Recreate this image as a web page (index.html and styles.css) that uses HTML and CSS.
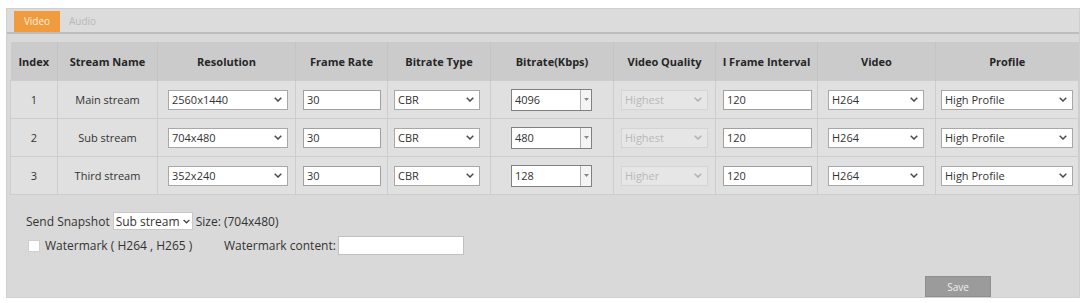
FILE: index.html
```html
<!DOCTYPE html>
<html>
<head>
<meta charset="utf-8">
<link rel="stylesheet" href="styles.css">
</head>
<body>
<div class="panel">
  <div class="tabs">
    <div class="tab active">Video</div>
    <div class="tab">Audio</div>
  </div>
  <table class="grid">
    <colgroup>
      <col style="width:47px"><col style="width:100px"><col style="width:138px"><col style="width:92px"><col style="width:103px"><col style="width:123px"><col style="width:102px"><col style="width:102px"><col style="width:118px"><col style="width:143px">
    </colgroup>
    <thead>
      <tr>
        <th>Index</th><th>Stream Name</th><th>Resolution</th><th>Frame Rate</th><th>Bitrate Type</th><th>Bitrate(Kbps)</th><th>Video Quality</th><th>I Frame Interval</th><th>Video</th><th>Profile</th>
      </tr>
    </thead>
    <tbody>
      <tr>
        <td class="c">1</td><td class="c">Main stream</td>
        <td><div class="sel w-res"><span>2560x1440</span><svg class="chev" viewBox="0 0 8 5"><path d="M0.7 0.7 L4 4 L7.3 0.7"/></svg></div></td>
        <td><input class="txt w-fr" type="text" value="30"></td>
        <td><div class="sel w-bt"><span>CBR</span><svg class="chev" viewBox="0 0 8 5"><path d="M0.7 0.7 L4 4 L7.3 0.7"/></svg></div></td>
        <td><div class="combo"><input class="txt w-br" type="text" value="4096"><span class="spin"><svg viewBox="0 0 5 3"><path d="M0 0 H5 L2.5 3Z"/></svg></span></div></td>
        <td><div class="sel w-q dis"><span>Highest</span><svg class="chev" viewBox="0 0 8 5"><path d="M0.7 0.7 L4 4 L7.3 0.7"/></svg></div></td>
        <td><input class="txt w-if" type="text" value="120"></td>
        <td><div class="sel w-v"><span>H264</span><svg class="chev" viewBox="0 0 8 5"><path d="M0.7 0.7 L4 4 L7.3 0.7"/></svg></div></td>
        <td><div class="sel w-p"><span>High Profile</span><svg class="chev" viewBox="0 0 8 5"><path d="M0.7 0.7 L4 4 L7.3 0.7"/></svg></div></td>
      </tr>
      <tr>
        <td class="c">2</td><td class="c">Sub stream</td>
        <td><div class="sel w-res"><span>704x480</span><svg class="chev" viewBox="0 0 8 5"><path d="M0.7 0.7 L4 4 L7.3 0.7"/></svg></div></td>
        <td><input class="txt w-fr" type="text" value="30"></td>
        <td><div class="sel w-bt"><span>CBR</span><svg class="chev" viewBox="0 0 8 5"><path d="M0.7 0.7 L4 4 L7.3 0.7"/></svg></div></td>
        <td><div class="combo"><input class="txt w-br" type="text" value="480"><span class="spin"><svg viewBox="0 0 5 3"><path d="M0 0 H5 L2.5 3Z"/></svg></span></div></td>
        <td><div class="sel w-q dis"><span>Highest</span><svg class="chev" viewBox="0 0 8 5"><path d="M0.7 0.7 L4 4 L7.3 0.7"/></svg></div></td>
        <td><input class="txt w-if" type="text" value="120"></td>
        <td><div class="sel w-v"><span>H264</span><svg class="chev" viewBox="0 0 8 5"><path d="M0.7 0.7 L4 4 L7.3 0.7"/></svg></div></td>
        <td><div class="sel w-p"><span>High Profile</span><svg class="chev" viewBox="0 0 8 5"><path d="M0.7 0.7 L4 4 L7.3 0.7"/></svg></div></td>
      </tr>
      <tr>
        <td class="c">3</td><td class="c">Third stream</td>
        <td><div class="sel w-res"><span>352x240</span><svg class="chev" viewBox="0 0 8 5"><path d="M0.7 0.7 L4 4 L7.3 0.7"/></svg></div></td>
        <td><input class="txt w-fr" type="text" value="30"></td>
        <td><div class="sel w-bt"><span>CBR</span><svg class="chev" viewBox="0 0 8 5"><path d="M0.7 0.7 L4 4 L7.3 0.7"/></svg></div></td>
        <td><div class="combo"><input class="txt w-br" type="text" value="128"><span class="spin"><svg viewBox="0 0 5 3"><path d="M0 0 H5 L2.5 3Z"/></svg></span></div></td>
        <td><div class="sel w-q dis"><span>Higher</span><svg class="chev" viewBox="0 0 8 5"><path d="M0.7 0.7 L4 4 L7.3 0.7"/></svg></div></td>
        <td><input class="txt w-if" type="text" value="120"></td>
        <td><div class="sel w-v"><span>H264</span><svg class="chev" viewBox="0 0 8 5"><path d="M0.7 0.7 L4 4 L7.3 0.7"/></svg></div></td>
        <td><div class="sel w-p"><span>High Profile</span><svg class="chev" viewBox="0 0 8 5"><path d="M0.7 0.7 L4 4 L7.3 0.7"/></svg></div></td>
      </tr>
    </tbody>
  </table>

  <div class="opts">
    <div class="line">
      <span>Send Snapshot</span>
      <div class="sel snap"><span>Sub stream</span><svg class="chev" viewBox="0 0 8 5"><path d="M0.7 0.7 L4 4 L7.3 0.7"/></svg></div>
      <span>Size: (704x480)</span>
    </div>
    <div class="line wm">
      <span class="chk"></span>
      <span class="wmlabel">Watermark ( H264 , H265 )</span>
      <span>Watermark content:</span>
      <input class="txt wmtext" type="text" value="">
    </div>
  </div>
  <div class="actions">
    <button class="save">Save</button>
  </div>
</div>
</body>
</html>
```

FILE: styles.css
```css
html, body {
  margin: 0;
  padding: 0;
  background: #ffffff;
}
body {
  font-family: "Open Sans", "Noto Sans", sans-serif;
  font-size: 11px;
  color: #2e2e2e;
}
.panel {
  margin: 8px 7px 0 6px;
  height: 290px;
  box-sizing: border-box;
  background: #d9d9d9;
  border: 1px solid #cfcfcf;
  display: flex;
  flex-direction: column;
}
.tabs {
  display: flex;
  align-items: flex-end;
  height: 28px;
  padding-left: 7px;
  background: #dcdcdc;
  border-bottom: 2px solid #bdbdbd;
  box-sizing: border-box;
}
.tab {
  height: 21px;
  line-height: 21px;
  padding: 0 9px;
  font-size: 10px;
  color: #b8b8b8;
}
.tab.active {
  width: 46px;
  box-sizing: border-box;
  text-align: center;
  background: #ef9b3e;
  color: #fdf0dc;
}
.grid {
  margin: 8px 0 0 3px;
  border-collapse: collapse;
  table-layout: fixed;
  width: 1068px;
}
.grid th {
  height: 38px;
  background: #cbcbcb;
  font-weight: 700;
  color: #262626;
  text-align: center;
  padding: 0;
  border-left: 1px solid #c4c4c4;
  white-space: nowrap;
}
.grid th:first-child { border-left: none; }
.grid td {
  height: 37px;
  background: #e0e0e0;
  border: 1px solid #cdcdcd;
  padding: 0 0 0 8px;
  vertical-align: middle;
}
.grid td.c {
  text-align: center;
  padding: 0;
  color: #333;
}
.sel {
  display: flex;
  align-items: center;
  justify-content: space-between;
  height: 20px;
  box-sizing: border-box;
  background: #fff;
  border: 1px solid #a8a8a8;
  padding: 0 5px 0 3px;
  color: #333;
  white-space: nowrap;
}
.chev {
  width: 8px;
  height: 5px;
  fill: none;
  stroke: #4a4a4a;
  stroke-width: 1.5;
}
.sel.dis {
  background: #e6e6e6;
  border-color: #d4d4d4;
  color: #b9b9b9;
}
.sel.dis .chev { stroke: #b0b0b0; }
.txt {
  height: 20px;
  box-sizing: border-box;
  border: 1px solid #a0a0a0;
  background: #fff;
  padding: 0 3px;
  font-family: inherit;
  font-size: 11px;
  color: #333;
  outline: none;
  margin: 0;
  display: block;
}
.w-res { width: 120px; margin-left: 2px; }
.w-fr { width: 78px; margin-left: -1px; }
.w-bt { width: 86px; margin-left: -2px; }
.combo {
  display: flex;
  width: 81px;
  margin-left: 12px;
  height: 22px;
  box-sizing: border-box;
  border: 1px solid #808080;
  background: #fff;
}
.combo .txt {
  border: none;
  height: 20px;
  flex: 1;
  min-width: 0;
}
.spin {
  width: 10px;
  border-left: 1px solid #b0b0b0;
  background: #f4f4f4;
  display: flex;
  align-items: center;
  justify-content: center;
}
.spin svg { width: 5px; height: 3px; fill: #888; }
.w-q { width: 87px; margin-left: -1px; }
.w-if { width: 89px; margin-left: -1px; }
.w-v { width: 96px; margin-left: 2px; }
.w-p { width: 132px; margin-left: -3px; }
.opts {
  padding: 17px 0 0 19px;
  display: flex;
  flex-direction: column;
  gap: 6px;
  color: #333;
  font-size: 12px;
}
.line {
  display: flex;
  align-items: center;
  gap: 3px;
}
.sel.snap {
  width: 80px;
  height: 18px;
  padding: 0 2px 0 2px;
  border-color: #c8c8c8;
}
.sel.snap .chev { width: 7px; }
.wm { gap: 0; }
.chk {
  width: 12px;
  height: 12px;
  background: #fff;
  border: 1px solid #cfcfcf;
  box-sizing: border-box;
  margin: 0 5px 0 2px;
}
.wmlabel { width: 179px; }
.wmtext {
  width: 126px;
  height: 19px;
  margin-left: 2px;
  border: 1px solid #c0c0c0;
}
.actions {
  display: flex;
  justify-content: flex-end;
  padding: 21px 88px 0 0;
}
.save {
  width: 66px;
  height: 21px;
  background: #9b9b9b;
  border: 1px solid #8f8f8f;
  color: #f0f0f0;
  font-family: inherit;
  font-size: 10px;
  padding: 0;
}
```
